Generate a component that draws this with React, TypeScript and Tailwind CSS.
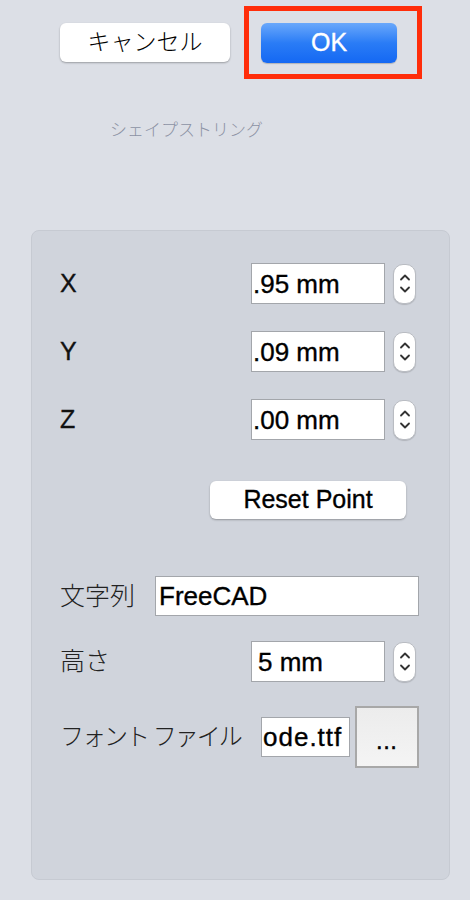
import React from "react";

const SANS = "font-['Liberation_Sans','Noto_Sans_CJK_JP',sans-serif]";
const HEAVY = "[-webkit-text-stroke:0.35px_currentColor]";

function Stepper() {
  return (
    <div className="w-[23px] h-[40px] rounded-[10px] bg-white border border-[#b9bcc2] shadow-[0_1px_1px_rgba(0,0,0,0.15)] flex flex-col items-center justify-center gap-[5px]">
      <svg width="12" height="8" viewBox="0 0 12 8">
        <path d="M2 6.5 L6 2.5 L10 6.5" fill="none" stroke="#333" strokeWidth="1.8" strokeLinecap="round" strokeLinejoin="round" />
      </svg>
      <svg width="12" height="8" viewBox="0 0 12 8">
        <path d="M2 1.5 L6 5.5 L10 1.5" fill="none" stroke="#333" strokeWidth="1.8" strokeLinecap="round" strokeLinejoin="round" />
      </svg>
    </div>
  );
}

function NumField({ value }: { value: string }) {
  return (
    <div className="w-[134px] h-[41px] bg-white border border-[#a3a6ab] flex items-center overflow-hidden pl-[1px]">
      <span className={`text-[26px] leading-none text-black whitespace-nowrap ${HEAVY}`}>{value}</span>
    </div>
  );
}

function AxisRow({ label, value }: { label: string; value: string }) {
  return (
    <div className="flex items-center h-[41px]">
      <span className={`flex-1 text-[25px] text-[#111] leading-none ${HEAVY}`}>{label}</span>
      <NumField value={value} />
      <div className="ml-[8px]">
        <Stepper />
      </div>
    </div>
  );
}

export default function App() {
  return (
    <div className={`w-[470px] h-[900px] bg-[#dcdfe6] overflow-hidden ${SANS}`}>
      <div className="flex items-start pt-[6px]">
        <button className="ml-[60px] mt-[17px] w-[170px] h-[39px] rounded-[6px] bg-white shadow-[0_1px_2px_rgba(0,0,0,0.3)] text-[23px] font-light text-black flex items-center justify-center">
          キャンセル
        </button>
        <div className="ml-[14px] w-[178px] h-[73px] border-[5px] border-[#ff2d0a]">
          <button className={`ml-[12px] mt-[12px] w-[136px] h-[40px] rounded-[6px] bg-[linear-gradient(to_bottom,#6aa8fb,#2a7cf6_50%,#1468f3)] shadow-[0_1px_1px_rgba(0,0,0,0.2)] text-white text-[25px] flex items-center justify-center ${HEAVY}`}>
            OK
          </button>
        </div>
      </div>

      <div className="ml-[110px] mt-[40px] text-[17px] leading-[24px] font-light text-[#8c92a4]">
        シェイプストリング
      </div>

      <div className="ml-[31px] mt-[87px] w-[419px] h-[650px] rounded-[8px] bg-[#d0d4dc] border border-[#c6cad2] flex flex-col pl-[28px] pr-[33px] pt-[32px]">
        <div className="flex flex-col gap-[27px]">
          <AxisRow label="X" value=".95 mm" />
          <AxisRow label="Y" value=".09 mm" />
          <AxisRow label="Z" value=".00 mm" />
        </div>

        <div className="flex justify-end mt-[41px] pr-[10px]">
          <button className={`w-[196px] h-[38px] rounded-[6px] bg-white shadow-[0_1px_2px_rgba(0,0,0,0.3)] text-[25px] text-black flex items-center justify-center ${HEAVY}`}>
            Reset Point
          </button>
        </div>

        <div className="flex items-center mt-[57px] h-[40px] -mr-[3px]">
          <span className="w-[95px] text-[25px] font-light text-[#222] leading-none">文字列</span>
          <div className="flex-1 h-[40px] bg-white border border-[#a3a6ab] flex items-center pl-[3px]">
            <span className={`text-[26px] leading-none text-black ${HEAVY}`}>FreeCAD</span>
          </div>
        </div>

        <div className="flex items-center mt-[25px] h-[41px]">
          <span className="flex-1 text-[25px] font-light text-[#222] leading-none">高さ</span>
          <div className="w-[134px] h-[41px] bg-white border border-[#a3a6ab] flex items-center pl-[6px]">
            <span className={`text-[26px] leading-none text-black ${HEAVY}`}>5 mm</span>
          </div>
          <div className="ml-[8px]">
            <Stepper />
          </div>
        </div>

        <div className="flex items-center mt-[24px] h-[62px] -mr-[3px]">
          <span className="flex-1 text-[24px] font-light tracking-[-2px] text-[#222] leading-none whitespace-nowrap">フォント ファイル</span>
          <div className="w-[89px] h-[40px] bg-white border border-[#a3a6ab] flex items-center overflow-hidden pl-[1px]">
            <span className={`text-[26px] leading-none text-black whitespace-nowrap tracking-[1px] ${HEAVY}`}>ode.ttf</span>
          </div>
          <button className="ml-[5px] w-[64px] h-[62px] bg-[linear-gradient(to_bottom,#ececec,#f4f4f4)] border-[2px] border-[#a8a8a8] flex items-center justify-center">
            <span className="text-[22px] leading-none text-black tracking-[1px] mt-[10px] [-webkit-text-stroke:0.6px_currentColor]">...</span>
          </button>
        </div>
      </div>
    </div>
  );
}
